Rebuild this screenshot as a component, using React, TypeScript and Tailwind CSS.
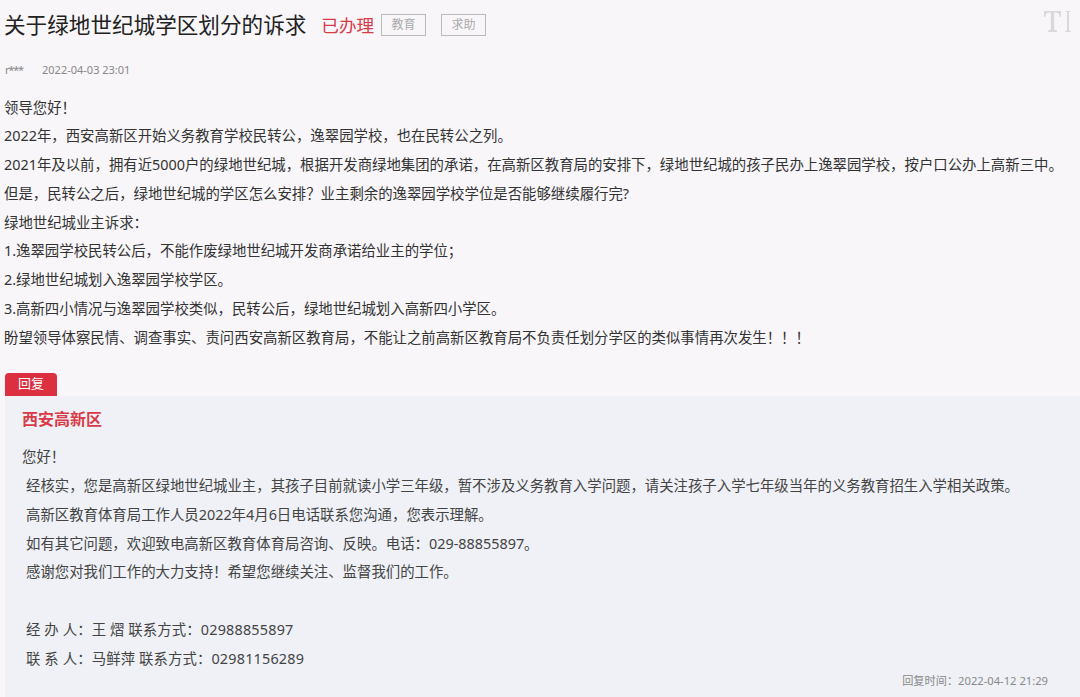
import React from 'react';

const font = { fontFamily: '"Noto Sans", "Noto Sans CJK SC", sans-serif' };

const petition = [
  '领导您好！',
  '2022年，西安高新区开始义务教育学校民转公，逸翠园学校，也在民转公之列。',
  '2021年及以前，拥有近5000户的绿地世纪城，根据开发商绿地集团的承诺，在高新区教育局的安排下，绿地世纪城的孩子民办上逸翠园学校，按户口公办上高新三中。',
  '但是，民转公之后，绿地世纪城的学区怎么安排？业主剩余的逸翠园学校学位是否能够继续履行完?',
  '绿地世纪城业主诉求：',
  '1.逸翠园学校民转公后，不能作废绿地世纪城开发商承诺给业主的学位；',
  '2.绿地世纪城划入逸翠园学校学区。',
  '3.高新四小情况与逸翠园学校类似，民转公后，绿地世纪城划入高新四小学区。',
  '盼望领导体察民情、调查事实、责问西安高新区教育局，不能让之前高新区教育局不负责任划分学区的类似事情再次发生！！！',
];

const reply = [
  '经核实，您是高新区绿地世纪城业主，其孩子目前就读小学三年级，暂不涉及义务教育入学问题，请关注孩子入学七年级当年的义务教育招生入学相关政策。',
  '高新区教育体育局工作人员2022年4月6日电话联系您沟通，您表示理解。',
  '如有其它问题，欢迎致电高新区教育体育局咨询、反映。电话：029-88855897。',
  '感谢您对我们工作的大力支持！希望您继续关注、监督我们的工作。',
];

export default function App() {
  return (
    <div className="relative h-[697px] w-[1080px] overflow-hidden bg-[#f8f6f9] pl-[4px] pt-[7px]" style={font}>
      <div className="flex h-[36px] items-center">
        <h1 className="text-[21.6px] font-normal leading-[36px] text-[#222]">关于绿地世纪城学区划分的诉求</h1>
        <span className="ml-[15px] text-[17.6px] leading-[36px] text-[#d93a48]">已办理</span>
        <span className="ml-[7px] flex h-[22px] w-[45px] items-center justify-center border border-[#bbb] text-[12px] text-[#aaa]">教育</span>
        <span className="ml-[15px] flex h-[22px] w-[45px] items-center justify-center border border-[#bbb] text-[12px] text-[#aaa]">求助</span>
      </div>
      <svg className="absolute right-[9px] top-[10px]" width="28" height="23" viewBox="0 0 28 23" fill="#d9d9d9">
        <path d="M1 1h17v6h-1.2c-.6-3-1.6-4.4-4.3-4.4h-1.3v16c0 1.2.6 1.6 2.6 1.7V22H5.200v-1.700c2-.1 2.600-.5 2.600-1.700v-16H6.500C3.800 2.600 2.800 4 2.200 7H1z" />
        <path d="M22.500 1h5v1h-1.500v18.500h1.500V22h-5v-1.500H24V2h-1.500z" />
      </svg>
      <div className="mt-[18px] flex h-[18px] items-center pl-[1px] text-[11px] text-[#888]">
        <span className="w-[37px] tracking-[-1.2px]">r***</span>
        <span>2022-04-03 23:01</span>
      </div>
      <div className="mt-[14.5px] text-[14.4px] leading-[28.8px] text-[#333]">
        {petition.map((line) => (
          <p key={line}>{line}</p>
        ))}
      </div>
      <div className="ml-[1px] mt-[20px] flex h-[23px] w-[52px] items-center justify-center rounded-t-[4px] bg-[#dc2f3f] text-[13px] text-white">回复</div>
      <div className="ml-[1px] h-[301px] bg-[#eff1f6] pl-[17px] pr-[32px] pt-[10px]">
        <h2 className="text-[16px] font-bold leading-[27px] text-[#d93a48]">西安高新区</h2>
        <div className="mt-[10.5px] text-[14.4px] leading-[28.8px] text-[#444]">
          <p>您好！</p>
          {reply.map((line) => (
            <p key={line} className="pl-[4px]">{line}</p>
          ))}
          <p className="pl-[4px]">&nbsp;</p>
          <p className="pl-[4px] tracking-[0.1px]">经 办 人：王 熠 联系方式：<span className="tracking-[0.2px]">02988855897</span></p>
          <p className="pl-[4px] tracking-[0.1px]">联 系 人：马鲜萍 联系方式：<span className="tracking-[0.2px]">02981156289</span></p>
        </div>
        <p className="mt-[-2px] text-right text-[11.2px] leading-[18px] text-[#888]">回复时间：2022-04-12 21:29</p>
      </div>
    </div>
  );
}
